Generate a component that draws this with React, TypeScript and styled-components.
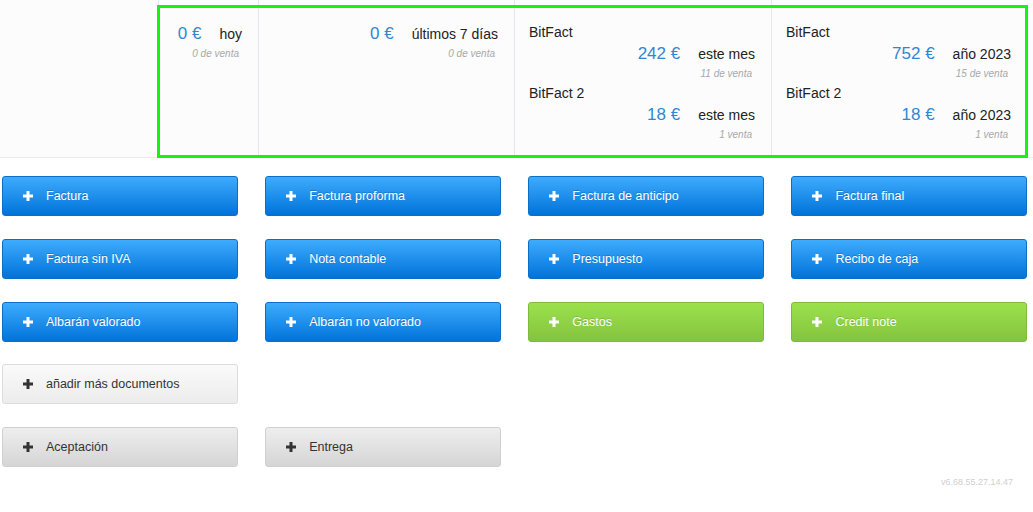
import styled, { createGlobalStyle, css } from 'styled-components';

const GlobalStyle = createGlobalStyle`
  html, body {
    margin: 0;
    padding: 0;
    background: #ffffff;
    font-family: 'Liberation Sans', Arial, sans-serif;
  }
`;

const Page = styled.div`
  display: flex;
  flex-direction: column;
  width: 1033px;
`;

const StatsBar = styled.div`
  position: relative;
  display: flex;
  height: 157px;
  background: #fcfcfc;
  border-bottom: 1px solid #ececec;
`;

const StatCol = styled.div.attrs((props: { w: number }) => props)`
  display: flex;
  flex-direction: column;
  width: ${(p) => p.w}px;
  flex-shrink: 0;
  box-sizing: border-box;
  padding: 22px 16px 0 14px;
  border-left: 1px solid #e6e6ec;

  &:first-child {
    border-left: none;
  }
`;

// highlight frame drawn over the stats columns
const Highlight = styled.div`
  position: absolute;
  left: 157px;
  top: 5px;
  width: 871px;
  height: 153px;
  box-sizing: border-box;
  border: 3px solid #12f512;
  pointer-events: none;
`;

const Brand = styled.div`
  font-size: 14px;
  line-height: 20px;
  color: #222;
`;

const AmountRow = styled.div`
  display: flex;
  justify-content: flex-end;
  align-items: center;
  gap: 18px;
  height: 24px;
`;

const Amount = styled.span`
  font-size: 17px;
  color: #2f86d4;
`;

const Period = styled.span`
  font-size: 14px;
  color: #222;
`;

const Sales = styled.div`
  margin: 2px 3px 3px 0;
  text-align: right;
  font-size: 10px;
  line-height: 12px;
  font-style: italic;
  color: #a8a8a8;
`;

const ButtonGrid = styled.div`
  display: grid;
  grid-template-columns: repeat(4, 1fr);
  column-gap: 27.6px;
  row-gap: 22.75px;
  padding: 18px 6px 0 2px;
`;

type Variant = 'blue' | 'green' | 'light' | 'gray';

const variants = {
  blue: css`
    background: linear-gradient(#3eabfd, #0073da);
    border-color: #0b6fc6;
    color: #fff;
    text-shadow: 0 -1px 0 rgba(0, 0, 0, 0.2);
  `,
  green: css`
    background: linear-gradient(#9ae24c, #84c33f);
    border-color: #7dbb3c;
    color: #fff;
    text-shadow: 0 -1px 0 rgba(0, 0, 0, 0.15);
  `,
  light: css`
    background: linear-gradient(#fafafa, #ececec);
    border-color: #dcdcdc;
    color: #333;
  `,
  gray: css`
    background: linear-gradient(#eeeeee, #d5d5d5);
    border-color: #d0d0d0;
    color: #333;
  `,
};

const DocButton = styled.button.attrs((props: { variant: Variant }) => props)`
  display: flex;
  align-items: center;
  gap: 13px;
  height: 40px;
  box-sizing: border-box;
  padding: 0 0 0 20px;
  border: 1px solid;
  border-radius: 3px;
  font-family: 'Liberation Sans', Arial, sans-serif;
  font-size: 12.5px;
  text-align: left;
  cursor: pointer;
  ${(p) => variants[p.variant]}
`;

const Filler = styled.div`
  grid-column: span 3;
`;

const Version = styled.div`
  align-self: flex-end;
  margin: 10px 20px 0 0;
  font-size: 9px;
  color: #cfcfcf;
`;

function PlusIcon() {
  return (
    <svg width="10" height="10" viewBox="0 0 10 10">
      <rect x="3.5" y="0" width="3" height="10" fill="currentColor" />
      <rect x="0" y="3.5" width="10" height="3" fill="currentColor" />
    </svg>
  );
}

const buttons: { label: string; variant: Variant }[] = [
  { label: 'Factura', variant: 'blue' },
  { label: 'Factura proforma', variant: 'blue' },
  { label: 'Factura de anticipo', variant: 'blue' },
  { label: 'Factura final', variant: 'blue' },
  { label: 'Factura sin IVA', variant: 'blue' },
  { label: 'Nota contable', variant: 'blue' },
  { label: 'Presupuesto', variant: 'blue' },
  { label: 'Recibo de caja', variant: 'blue' },
  { label: 'Albarán valorado', variant: 'blue' },
  { label: 'Albarán no valorado', variant: 'blue' },
  { label: 'Gastos', variant: 'green' },
  { label: 'Credit note', variant: 'green' },
];

function App() {
  return (
    <Page>
      <GlobalStyle />
      <StatsBar>
        <StatCol w={158} />
        <StatCol w={100}>
          <AmountRow>
            <Amount>0 €</Amount>
            <Period>hoy</Period>
          </AmountRow>
          <Sales>0 de venta</Sales>
        </StatCol>
        <StatCol w={256}>
          <AmountRow>
            <Amount>0 €</Amount>
            <Period>últimos 7 días</Period>
          </AmountRow>
          <Sales>0 de venta</Sales>
        </StatCol>
        <StatCol w={257}>
          <Brand>BitFact</Brand>
          <AmountRow>
            <Amount>242 €</Amount>
            <Period>este mes</Period>
          </AmountRow>
          <Sales>11 de venta</Sales>
          <Brand>BitFact 2</Brand>
          <AmountRow>
            <Amount>18 €</Amount>
            <Period>este mes</Period>
          </AmountRow>
          <Sales>1 venta</Sales>
        </StatCol>
        <StatCol w={256}>
          <Brand>BitFact</Brand>
          <AmountRow>
            <Amount>752 €</Amount>
            <Period>año 2023</Period>
          </AmountRow>
          <Sales>15 de venta</Sales>
          <Brand>BitFact 2</Brand>
          <AmountRow>
            <Amount>18 €</Amount>
            <Period>año 2023</Period>
          </AmountRow>
          <Sales>1 venta</Sales>
        </StatCol>
        <Highlight />
      </StatsBar>

      <ButtonGrid>
        {buttons.map((b) => (
          <DocButton key={b.label} variant={b.variant}>
            <PlusIcon />
            {b.label}
          </DocButton>
        ))}
        <DocButton variant="light">
          <PlusIcon />
          añadir más documentos
        </DocButton>
        <Filler />
        <DocButton variant="gray">
          <PlusIcon />
          Aceptación
        </DocButton>
        <DocButton variant="gray">
          <PlusIcon />
          Entrega
        </DocButton>
      </ButtonGrid>

      <Version>v6.68.55.27.14.47</Version>
    </Page>
  );
}

export default App;
